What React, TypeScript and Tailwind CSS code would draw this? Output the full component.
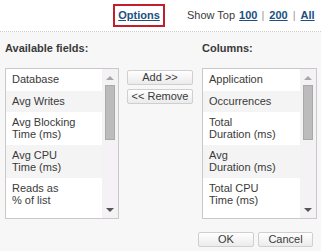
import React from 'react';

type Row = { lines: string[] };

const available: Row[] = [
  { lines: ['Database'] },
  { lines: ['Avg Writes'] },
  { lines: ['Avg Blocking', 'Time (ms)'] },
  { lines: ['Avg CPU', 'Time (ms)'] },
  { lines: ['Reads as', '% of list'] },
];

const columns: Row[] = [
  { lines: ['Application'] },
  { lines: ['Occurrences'] },
  { lines: ['Total', 'Duration (ms)'] },
  { lines: ['Avg', 'Duration (ms)'] },
  { lines: ['Total CPU', 'Time (ms)'] },
];

function ListBox({ rows, width }: { rows: Row[]; width: string }) {
  return (
    <div className={`${width} h-[151px] border border-[#c9c9c9] bg-white flex overflow-hidden`}>
      <div className="flex-1 flex flex-col">
        {rows.map((r, i) => (
          <div
            key={i}
            className={`pl-[6px] py-[5px] leading-[11.5px] ${i % 2 === 1 ? 'bg-[#f4f4f4]' : 'bg-white'}`}
          >
            {r.lines.map((l, j) => (
              <div key={j} className="whitespace-nowrap">{l}</div>
            ))}
          </div>
        ))}
      </div>

      {/* scrollbar */}
      <div className="w-[16px] bg-[#f4f2f5] flex flex-col items-center">
        <div className="mt-[7px] w-0 h-0 border-l-[4px] border-r-[4px] border-b-[4px] border-l-transparent border-r-transparent border-b-[#a8a8a8]" />
        <div className="mt-[5px] w-[10px] h-[55px] bg-[#bcbcbc] border border-[#a9a9a9]" />
        <div className="flex-1" />
        <div className="mb-[6px] w-0 h-0 border-l-[4px] border-r-[4px] border-t-[4px] border-l-transparent border-r-transparent border-t-[#555555]" />
      </div>
    </div>
  );
}

function Btn({ label, className }: { label: string; className: string }) {
  return (
    <button
      className={`${className} h-[15px] border border-[#cfcfcf] rounded-[2px] bg-gradient-to-b from-white to-[#ebebeb] text-[11px] leading-[13px] text-[#3a3a3a] flex items-center justify-center`}
    >
      {label}
    </button>
  );
}

export default function App() {
  return (
    <div className="w-[321px] h-[251px] bg-[#f7f7f7] font-['Liberation_Sans',sans-serif] text-[11px] text-[#3a3a3a] overflow-hidden">
      {/* Top bar */}
      <div className="h-[32px] bg-white border-b border-dotted border-[#cccccc] flex items-center pl-[113px]">
        <div className="w-[52px] h-[23px] border-2 border-[#c21f2c] flex items-center justify-center">
          <span className="font-bold underline text-[#204f7f]">Options</span>
        </div>
        <span className="ml-[22px]">Show Top</span>
        <span className="ml-[4px] font-bold underline text-[#204f7f]">100</span>
        <span className="ml-[4px] text-[#999]">|</span>
        <span className="ml-[5px] font-bold underline text-[#204f7f]">200</span>
        <span className="ml-[5px] text-[#999]">|</span>
        <span className="ml-[5px] font-bold underline text-[#204f7f]">All</span>
      </div>

      {/* Headings */}
      <div className="mt-[10px] pl-[5px] flex leading-[13px] font-bold">
        <div className="w-[197px]">Available fields:</div>
        <div>Columns:</div>
      </div>

      {/* Lists */}
      <div className="mt-[13px] pl-[5px] flex">
        <ListBox rows={available} width="w-[114px]" />
        <div className="ml-[8px] w-[66px] flex flex-col pt-[2px] gap-[4px]">
          <Btn label="Add >>" className="w-[66px]" />
          <Btn label="<< Remove" className="w-[66px]" />
        </div>
        <div className="ml-[9px]">
          <ListBox rows={columns} width="w-[115px]" />
        </div>
      </div>

      {/* Footer */}
      <div className="mt-[13px] flex justify-end pr-[8px] gap-[4px]">
        <Btn label="OK" className="w-[56px]" />
        <Btn label="Cancel" className="w-[55px]" />
      </div>
    </div>
  );
}
